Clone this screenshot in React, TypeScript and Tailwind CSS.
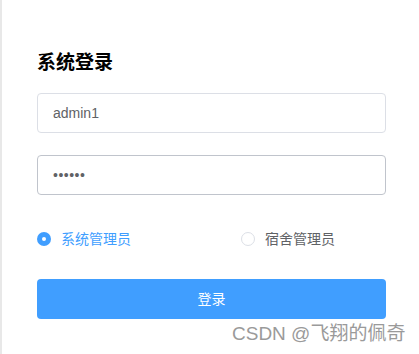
import React, { useState } from 'react'

export default function App() {
  const [role, setRole] = useState('admin')

  return (
    <div
      className="relative h-[354px] w-[419px] overflow-hidden bg-white"
      style={{ fontFamily: '"Liberation Sans", "Noto Sans CJK SC", sans-serif' }}
    >
      {/* left strip */}
      <div className="absolute inset-y-0 left-0 w-[2px] bg-[#e8e8e8]" />

      <div className="ml-[37px] flex w-[349px] flex-col pt-[52px]">
        <h2 className="text-[19px] font-bold leading-[22px] text-[#000]">系统登录</h2>

        {/* Username */}
        <div className="mt-[19px] flex h-[40px] items-center rounded-[4px] border border-[#dcdfe6] px-[15px]">
          <span className="text-[14px] text-[#606266]">admin1</span>
        </div>

        {/* Password */}
        <div className="mt-[22px] flex h-[40px] items-center rounded-[4px] border border-[#c0c4cc] px-[15px]">
          <span className="text-[14px] tracking-[0.5px] text-[#606266]">••••••</span>
        </div>

        {/* Roles */}
        <div className="mt-[36px] flex h-[16px] items-center">
          <button
            className="flex w-[204px] items-center gap-[10px]"
            onClick={() => setRole('admin')}
          >
            <span
              className={
                role === 'admin'
                  ? 'flex h-[14px] w-[14px] items-center justify-center rounded-full bg-[#409eff]'
                  : 'h-[14px] w-[14px] rounded-full border border-[#dcdfe6] bg-white'
              }
            >
              {role === 'admin' && <span className="h-[4px] w-[4px] rounded-full bg-white" />}
            </span>
            <span className={role === 'admin' ? 'text-[14px] text-[#409eff]' : 'text-[14px] text-[#606266]'}>
              系统管理员
            </span>
          </button>
          <button className="flex items-center gap-[10px]" onClick={() => setRole('dorm')}>
            <span
              className={
                role === 'dorm'
                  ? 'flex h-[14px] w-[14px] items-center justify-center rounded-full bg-[#409eff]'
                  : 'h-[14px] w-[14px] rounded-full border border-[#dcdfe6] bg-white'
              }
            >
              {role === 'dorm' && <span className="h-[4px] w-[4px] rounded-full bg-white" />}
            </span>
            <span className={role === 'dorm' ? 'text-[14px] text-[#409eff]' : 'text-[14px] text-[#606266]'}>
              宿舍管理员
            </span>
          </button>
        </div>

        {/* Submit */}
        <button className="mt-[32px] flex h-[40px] items-center justify-center rounded-[4px] bg-[#409eff] text-[14px] text-white">
          登录
        </button>
      </div>

      {/* watermark */}
      <div className="absolute left-[232px] top-[321px] text-[19px] leading-[26px] text-[#9a9a9a] [text-shadow:0_0_1px_#fff]">
        CSDN @飞翔的佩奇
      </div>
    </div>
  )
}
